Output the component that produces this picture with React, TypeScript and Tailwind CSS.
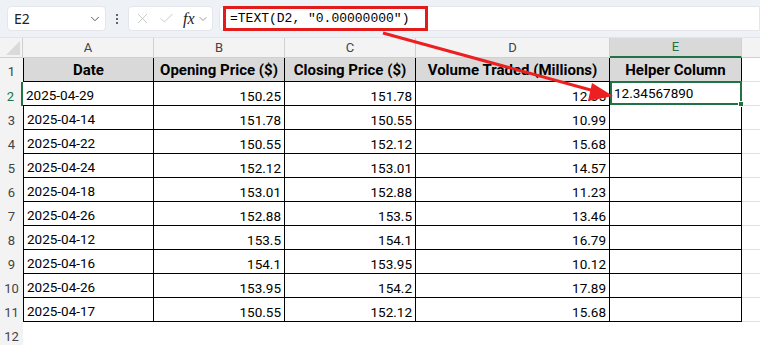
import { ChevronDown, X, Check } from "lucide-react";

const rows = [
  ["2025-04-29", "150.25", "151.78", "12.35"],
  ["2025-04-14", "151.78", "150.55", "10.99"],
  ["2025-04-22", "150.55", "152.12", "15.68"],
  ["2025-04-24", "152.12", "153.01", "14.57"],
  ["2025-04-18", "153.01", "152.88", "11.23"],
  ["2025-04-26", "152.88", "153.5", "13.46"],
  ["2025-04-12", "153.5", "154.1", "16.79"],
  ["2025-04-16", "154.1", "153.95", "10.12"],
  ["2025-04-26", "153.95", "154.2", "17.89"],
  ["2025-04-17", "150.55", "152.12", "15.68"],
];

const headers = ["Date", "Opening Price ($)", "Closing Price ($)", "Volume Traded (Millions)", "Helper Column"];

const cellFont = { fontFamily: "Roboto, 'Noto Sans', sans-serif" };

export default function App() {
  return (
    <div className="relative w-[760px] h-[345px] overflow-hidden bg-white text-black">
      {/* formula bar */}
      <div className="h-[38px] bg-[#eef2f6] flex items-center pl-[7px] border-b border-[#e2e5e8]">
        <div className="w-[99px] h-[25px] bg-white rounded-[4px] border border-[#e3e6ea] flex items-center justify-between pl-[6px] pr-[3px]">
          <span className="text-[14px] text-[#222]" style={{ fontFamily: "'Noto Sans', sans-serif" }}>E2</span>
          <ChevronDown size={14} strokeWidth={1.5} className="text-[#444]" />
        </div>
        <div className="w-[22px] flex flex-col items-center gap-[2px]">
          <span className="w-[2px] h-[2px] bg-[#333] rounded-full" />
          <span className="w-[2px] h-[2px] bg-[#333] rounded-full" />
          <span className="w-[2px] h-[2px] bg-[#333] rounded-full" />
        </div>
        <div className="w-[85px] h-[25px] bg-white rounded-[4px] border border-[#e3e6ea] flex items-center pl-[5px]">
          <X size={17} strokeWidth={1} className="text-[#b4b4b4]" />
          <Check size={17} strokeWidth={1} className="text-[#b4b4b4] ml-[7px]" />
          <span className="ml-[8px] text-[16px] italic text-[#222]" style={{ fontFamily: "'Liberation Serif', serif" }}>fx</span>
          <ChevronDown size={12} strokeWidth={1.5} className="text-[#777] ml-[2px]" />
        </div>
        <div className="ml-[6px] flex-1 h-[25px] bg-white rounded-l-[4px] border border-[#e3e6ea] flex items-center">
          <div className="ml-[3px] h-[25px] w-[205px] border-[3px] border-[#e31b1b] flex items-center pl-[4px]">
            <span className="text-[13px] text-black whitespace-pre" style={{ fontFamily: "'Liberation Mono', monospace" }}>
              =TEXT(D2, "0.00000000")
            </span>
          </div>
        </div>
      </div>

      {/* grid */}
      <div className="grid grid-cols-[23px_131px_131px_131px_194px_132px_1fr]" style={cellFont}>
        {/* column header row */}
        <div className="h-[20px] bg-[#f3f3f3] border-r border-b border-[#d0d0d0] relative">
          <div className="absolute right-[2px] bottom-[2px] w-0 h-0 border-l-[14px] border-l-transparent border-b-[14px] border-b-[#dadada]" />
        </div>
        {["A", "B", "C", "D"].map((l) => (
          <div key={l} className="h-[20px] bg-[#f3f3f3] border-r border-b border-[#d0d0d0] flex items-center justify-center text-[13px] text-[#444]">
            {l}
          </div>
        ))}
        <div className="h-[20px] bg-[#d9d9d9] border-r border-[#d0d0d0] border-b-2 border-b-[#217346] flex items-center justify-center text-[13px] text-[#217346]">
          E
        </div>
        <div className="h-[20px] bg-[#f3f3f3] border-b border-[#d0d0d0]" />

        {/* row 1 */}
        <div className="h-[24px] bg-[#f3f3f3] flex items-end justify-center pb-[2px] leading-[16px] text-[13px] text-[#444]">1</div>
        {headers.map((h, i) => (
          <div
            key={h}
            className={`h-[24px] bg-[#d9d9d9] border-r border-b border-black flex items-end justify-center pb-[2px] leading-[18px] text-[15px] font-bold ${i === 0 ? "border-l" : ""}`}
          >
            {h}
          </div>
        ))}
        <div className="h-[24px] border-b border-[#e1e1e1]" />

        {rows.map((r, ri) => {
          const n = ri + 2;
          const sel = n === 2;
          return [
            <div
              key={`h${n}`}
              className={`h-[24px] bg-[#f3f3f3] flex items-end justify-center pb-[1px] leading-[16px] text-[13px] ${sel ? "text-[#217346] border-r-2 border-r-[#217346]" : "text-[#444]"}`}
            >
              {n}
            </div>,
            <div key={`a${n}`} className={`h-[24px] border-r border-b border-black flex items-end pl-[3px] pb-[2px] leading-[16px] text-[13.5px] ${sel ? "" : "border-l"}`}>
              {r[0]}
            </div>,
            ...[1, 2, 3].map((c) => (
              <div key={`c${n}${c}`} className="h-[24px] border-r border-b border-black flex items-end justify-end pr-[3px] pb-[1px] leading-[16px] text-[13.5px]">
                {r[c]}
              </div>
            )),
            sel ? (
              <div key={`e${n}`} className="h-[24px] border-2 border-[#217346] -mt-[1px] relative flex items-end pl-[2px] pb-[2px] leading-[16px] text-[13.5px]">
                12.34567890
                <span className="absolute -right-[4px] -bottom-[4px] w-[6px] h-[6px] bg-[#217346] border border-white" />
              </div>
            ) : (
              <div key={`e${n}`} className="h-[24px] border-r border-b border-black" />
            ),
            <div key={`f${n}`} className="h-[24px] border-b border-[#e1e1e1]" />,
          ];
        })}

        {/* row 12 */}
        <div className="h-[24px] bg-[#f3f3f3] flex items-end justify-center pb-[1px] leading-[16px] text-[13px] text-[#444]">12</div>
        <div className="col-span-6" />
      </div>

      {/* red arrow overlay */}
      <svg className="absolute left-0 top-0 pointer-events-none" width="760" height="345">
        <line x1="383" y1="33" x2="598" y2="92" stroke="#ec2020" strokeWidth="3" />
        <polygon points="613,96 592,83 588,101" fill="#ec2020" />
      </svg>
    </div>
  );
}
